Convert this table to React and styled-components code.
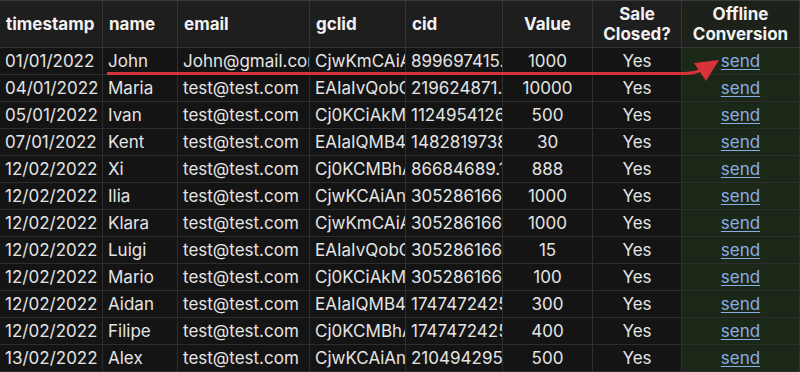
import React from "react";
import styled, { createGlobalStyle } from "styled-components";

const Global = createGlobalStyle`
  html, body { margin: 0; padding: 0; background: #121212; }
  body { font-family: Inter, "Noto Sans", sans-serif; }
`;

const COLS = "103px 75px 132px 96px 97px 90px 89px 118px";

const Wrap = styled.div`
  position: relative;
  width: 800px;
  height: 372px;
  overflow: hidden;
  background: #131313;
`;

const Grid = styled.div`
  display: grid;
  grid-template-columns: ${COLS};
  grid-template-rows: 48px repeat(12, 27px);
`;

const Head = styled.div`
  box-sizing: border-box;
  border-top: 1px solid #3a3a3a;
  border-right: 1px solid #353535;
  border-bottom: 1px solid #353535;
  color: #f2f2f2;
  font-weight: 700;
  font-size: 17px;
  line-height: 20px;
  display: flex;
  align-items: center;
  justify-content: ${(p) => (p.$center ? "center" : "flex-start")};
  text-align: ${(p) => (p.$center ? "center" : "left")};
  padding: 0 ${(p) => (p.$center ? "1px" : "4px")} 0 ${(p) => (p.$center ? "1px" : "6px")};
  white-space: nowrap;
  overflow: hidden;
  background: ${(p) => (p.$green ? "#1c2219" : "#1e1e1e")};
`;

const Cell = styled.div`
  box-sizing: border-box;
  background: ${(p) => (p.$green ? "#1c2817" : "#141414")};
  border-right: 1px solid #2f2f2f;
  border-bottom: 1px solid #2e2e2e;
  color: #e4e4e4;
  font-size: 17px;
  line-height: 26px;
  padding-left: ${(p) => (p.$center ? "0" : "5px")};
  text-align: ${(p) => (p.$center ? "center" : "left")};
  white-space: nowrap;
  overflow: hidden;
`;

const Link = styled.a`
  color: #88aee6;
  text-decoration: underline;
  text-underline-offset: 2px;
  cursor: pointer;
`;

const Arrow = styled.svg`
  position: absolute;
  left: 0;
  top: 0;
  pointer-events: none;
`;

const rows = [
  ["01/01/2022", "John", "John@gmail.com", "CjwKmCAiA", "899697415.", "1000"],
  ["04/01/2022", "Maria", "test@test.com", "EAIaIvQobC", "219624871.", "10000"],
  ["05/01/2022", "Ivan", "test@test.com", "Cj0KCiAkM", "1124954126", "500"],
  ["07/01/2022", "Kent", "test@test.com", "EAIaIQMB4", "1482819738", "30"],
  ["12/02/2022", "Xi", "test@test.com", "Cj0KCMBhA", "86684689.1", "888"],
  ["12/02/2022", "Ilia", "test@test.com", "CjwKCAiAn", "3052861663", "1000"],
  ["12/02/2022", "Klara", "test@test.com", "CjwKmCAiA", "3052861663", "1000"],
  ["12/02/2022", "Luigi", "test@test.com", "EAIaIvQobC", "3052861663", "15"],
  ["12/02/2022", "Mario", "test@test.com", "Cj0KCiAkM", "3052861663", "100"],
  ["12/02/2022", "Aidan", "test@test.com", "EAIaIQMB4", "1747472425", "300"],
  ["12/02/2022", "Filipe", "test@test.com", "Cj0KCMBhA", "1747472425", "400"],
  ["13/02/2022", "Alex", "test@test.com", "CjwKCAiAn", "2104942951", "500"],
];

export default function App() {
  return (
    <>
      <Global />
      <Wrap>
        <Grid>
          <Head>timestamp</Head>
          <Head>name</Head>
          <Head>email</Head>
          <Head>gclid</Head>
          <Head>cid</Head>
          <Head $center>Value</Head>
          <Head $center>
            Sale
            <br />
            Closed?
          </Head>
          <Head $center $green>
            Offline
            <br />
            Conversion
          </Head>
          {rows.map((r, i) => (
            <React.Fragment key={i}>
              <Cell>{r[0]}</Cell>
              <Cell>{r[1]}</Cell>
              <Cell>{r[2]}</Cell>
              <Cell>{r[3]}</Cell>
              <Cell>{r[4]}</Cell>
              <Cell $center>{r[5]}</Cell>
              <Cell $center>Yes</Cell>
              <Cell $center $green>
                <Link>send</Link>
              </Cell>
            </React.Fragment>
          ))}
        </Grid>
        <Arrow width="800" height="372" viewBox="0 0 800 372">
          <path
            d="M107 73.5 L684 73.5 C694 73.5 699 72 704 68"
            stroke="#d8323a"
            strokeWidth="3"
            fill="none"
          />
          <polygon points="719,60 694,63 706,81" fill="#d8323a" />
        </Arrow>
      </Wrap>
    </>
  );
}
